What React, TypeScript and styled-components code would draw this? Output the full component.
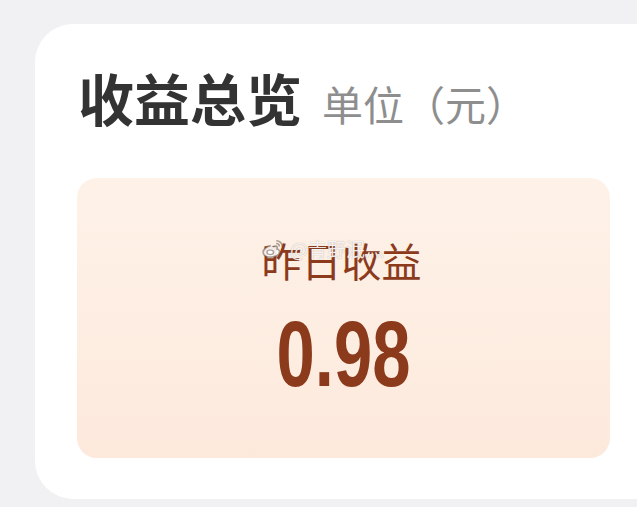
import React, { FC } from "react";
import styled, { createGlobalStyle } from "styled-components";

const GlobalStyle = createGlobalStyle`
  html, body {
    margin: 0;
    padding: 0;
    background: #f1f1f3;
  }

  body {
    font-family: "Noto Sans CJK SC", "Noto Sans", sans-serif;
  }
`;

const Page = styled.div`
  width: 637px;
  height: 507px;
  overflow: hidden;
  padding: 24px 0 0 35px;
  box-sizing: border-box;
`;

const Card = styled.section`
  width: 642px;
  box-sizing: border-box;
  padding: 45px 67px 41px 43px;
  background: #fff;
  border-radius: 38px;
`;

const Header = styled.div`
  display: flex;
  align-items: baseline;
  gap: 20px;
  margin-bottom: 53px;
`;

const Title = styled.h2`
  margin: 0;
  font-size: 56px;
  line-height: 56px;
  font-weight: 700;
  color: #333;
`;

const Unit = styled.span`
  font-size: 41px;
  line-height: 41px;
  font-weight: 400;
  color: #8e8e8e;
`;

const Summary = styled.div`
  position: relative;
  height: 280px;
  margin-left: -1px;
  box-sizing: border-box;
  padding-top: 62px;
  display: flex;
  flex-direction: column;
  align-items: center;
  border-radius: 20px;
  background: linear-gradient(180deg, #fef2e8 0%, #fde9dc 100%);
  color: #8b3a1b;
`;

const Label = styled.div`
  font-size: 40px;
  line-height: 40px;
  margin-left: -4px;
`;

const Amount = styled.div`
  margin-top: 28px;
  font-family: "Liberation Sans", Arial, sans-serif;
  font-weight: 700;
  font-size: 93px;
  line-height: 1;
  transform: scaleX(0.74);
`;

const Mark = styled.div`
  position: absolute;
  left: 184px;
  top: 60px;
  display: flex;
  align-items: center;
  gap: 5px;
  font-size: 19px;
  line-height: 22px;
  color: rgba(255, 255, 255, 0.9);
  text-shadow: 0 0 1px rgba(90, 70, 60, 0.5);
  pointer-events: none;
`;

const WeiboLogo: FC = () => (
  <svg width="24" height="22" viewBox="0 0 22 20" fill="none">
    <path
      d="M9 7c-3.5 0.5-7 3-7 6 0 3 3.5 4.5 7 4.5 4.5 0 8-2.3 8-5 0-1.6-1.5-2.2-2.4-2.5 0.6-1.5 0.2-2.6-1.4-2.6-1 0-2.2 0.6-2.2 0.6"
      stroke="rgba(90,70,60,0.5)"
      strokeWidth="1.6"
      fill="rgba(255,255,255,0.9)"
    />
    <ellipse cx="8.5" cy="13" rx="3" ry="2.2" stroke="rgba(90,70,60,0.5)" strokeWidth="1.2" />
    <path d="M14 2.5c3 0 5.5 2.2 5.5 5.2" stroke="rgba(90,70,60,0.5)" strokeWidth="1.4" />
    <path d="M14 5c1.6 0 2.9 1.2 2.9 2.8" stroke="rgba(90,70,60,0.5)" strokeWidth="1.3" />
  </svg>
);

const App: FC = () => (
  <>
    <GlobalStyle />
    <Page>
      <Card>
        <Header>
          <Title>收益总览</Title>
          <Unit>单位（元）</Unit>
        </Header>
        <Summary>
          <Label>昨日收益</Label>
          <Amount>0.98</Amount>
          <Mark>
            <WeiboLogo />
            <span>@青野泯灬</span>
          </Mark>
        </Summary>
      </Card>
    </Page>
  </>
);

export default App;
